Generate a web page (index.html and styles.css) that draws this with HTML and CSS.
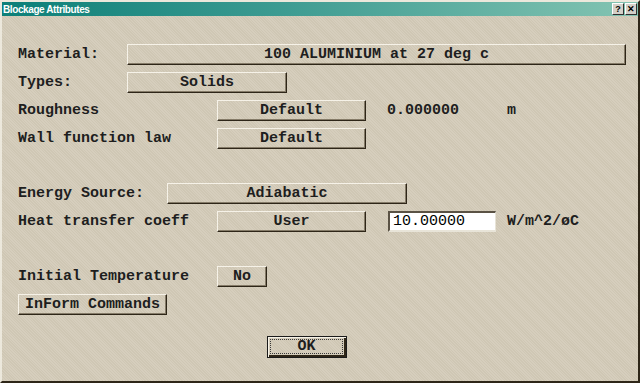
FILE: index.html
```html
<!DOCTYPE html>
<html>
<head>
	<meta charset="utf-8">
	<title>Blockage Attributes</title>
	<link rel="stylesheet" href="styles.css">
</head>
<body>
	<div class="window">
		<div class="titlebar">
			<span class="title">Blockage Attributes</span>
			<span class="title-buttons">
				<span class="tbtn">?</span>
				<span class="tbtn">&#x2715;</span>
			</span>
		</div>

		<div class="content">
			<div class="row first">
				<span class="label label-m">Material:</span>
				<button type="button" class="btn btn-material">100 ALUMINIUM at 27 deg c</button>
			</div>
			<div class="row">
				<span class="label label-m">Types:</span>
				<button type="button" class="btn btn-types">Solids</button>
			</div>
			<div class="row">
				<span class="label label-l">Roughness</span>
				<button type="button" class="btn btn-std">Default</button>
				<span class="value">0.000000</span>
				<span class="unit">m</span>
			</div>
			<div class="row">
				<span class="label label-l">Wall function law</span>
				<button type="button" class="btn btn-std">Default</button>
			</div>

			<div class="row section">
				<span class="label label-e">Energy Source:</span>
				<button type="button" class="btn btn-energy">Adiabatic</button>
			</div>
			<div class="row">
				<span class="label label-l">Heat transfer coeff</span>
				<button type="button" class="btn btn-std">User</button>
				<input type="text" class="field" value="10.00000">
				<span class="unit unit-field">W/m^2/øC</span>
			</div>

			<div class="row section">
				<span class="label label-l">Initial Temperature</span>
				<button type="button" class="btn btn-no">No</button>
			</div>
			<div class="row">
				<button type="button" class="btn btn-std">InForm Commands</button>
			</div>

			<div class="row ok-row">
				<button type="button" class="btn btn-ok"><span class="focus">OK</span></button>
			</div>
		</div>
	</div>
</body>
</html>
```

FILE: styles.css
```css
body {
	margin: 0;
	padding: 0;
	background-color: #d4ccba;
}

.window {
	width: 640px;
	height: 383px;
	box-sizing: border-box;
	border-style: solid;
	border-width: 2px;
	border-color: #ece8dc #2e2618 #2e2618 #ece8dc;
	background-color: #d4ccba;
	background-image: repeating-linear-gradient(45deg, #d6cebd 0px, #d6cebd 1px, #cfc7b4 1px, #cfc7b4 2px);
	font-family: "Liberation Mono", "DejaVu Sans Mono", monospace;
	font-size: 15px;
	font-weight: bold;
	color: #1e1e1e;
}

.titlebar {
	height: 14px;
	display: flex;
	align-items: center;
	justify-content: space-between;
	background: linear-gradient(to right, #0c7f78, #3e9c92 45%, #84c4b2);
	padding: 0 1px 0 1px;
}

.title {
	font-family: "Liberation Sans", Arial, sans-serif;
	font-size: 10px;
	font-weight: bold;
	letter-spacing: -0.4px;
	color: #ffffff;
}

.title-buttons {
	display: flex;
	gap: 1px;
}

.tbtn {
	width: 12px;
	height: 12px;
	box-sizing: border-box;
	display: flex;
	align-items: center;
	justify-content: center;
	background-color: #d4d0c8;
	border-style: solid;
	border-width: 1px;
	border-color: #ffffff #303030 #303030 #ffffff;
	font-family: "Liberation Sans", Arial, sans-serif;
	font-size: 9px;
	font-weight: bold;
	color: #000;
	line-height: 1;
}

.content {
	padding: 28px 0 0 16px;
}

.row {
	display: flex;
	align-items: center;
	height: 21px;
	margin-top: 7px;
}

.row.first {
	margin-top: 0;
}

.row.section {
	margin-top: 34px;
}

.row.ok-row {
	margin-top: 21px;
	height: 22px;
}

.label {
	white-space: pre;
}

.label-m {
	width: 109px;
}

.label-l {
	width: 199px;
}

.label-e {
	width: 149px;
}

.btn {
	height: 21px;
	box-sizing: border-box;
	padding: 0;
	margin: 0;
	font-family: inherit;
	font-size: 15px;
	font-weight: bold;
	color: #1e1e1e;
	background: transparent;
	border-style: solid;
	border-width: 1px;
	border-color: #f6f2e8 #2e2618 #2e2618 #f6f2e8;
	box-shadow: inset -1px -1px 0 #857b68;
	cursor: pointer;
}

.btn-material {
	width: 499px;
}

.btn-types {
	width: 160px;
}

.btn-std {
	width: 149px;
}

.btn-energy {
	width: 240px;
}

.btn-no {
	width: 50px;
}

.btn-ok {
	width: 80px;
	height: 22px;
	margin-left: 249px;
	border-color: #1a1a1a;
	box-shadow: inset 1px 1px 0 #f6f2e8, inset -2px -2px 0 #2e2618;
	padding: 2px 3px 3px 2px;
}

.focus {
	display: block;
	height: 100%;
	box-sizing: border-box;
	border: 1px dotted #3a3a3a;
	line-height: 13px;
}

.value {
	margin-left: 21px;
	width: 120px;
}

.field {
	width: 108px;
	height: 21px;
	box-sizing: border-box;
	margin: 0 0 0 22px;
	padding: 0 3px;
	font-family: inherit;
	font-size: 15px;
	font-weight: normal;
	color: #000;
	background-color: #ffffff;
	border-style: solid;
	border-width: 2px 1px 2px 2px;
	border-color: #5a5244 #e8e4d8 #e8e4d8 #5a5244;
	outline: none;
}

.unit-field {
	margin-left: 11px;
}
```
